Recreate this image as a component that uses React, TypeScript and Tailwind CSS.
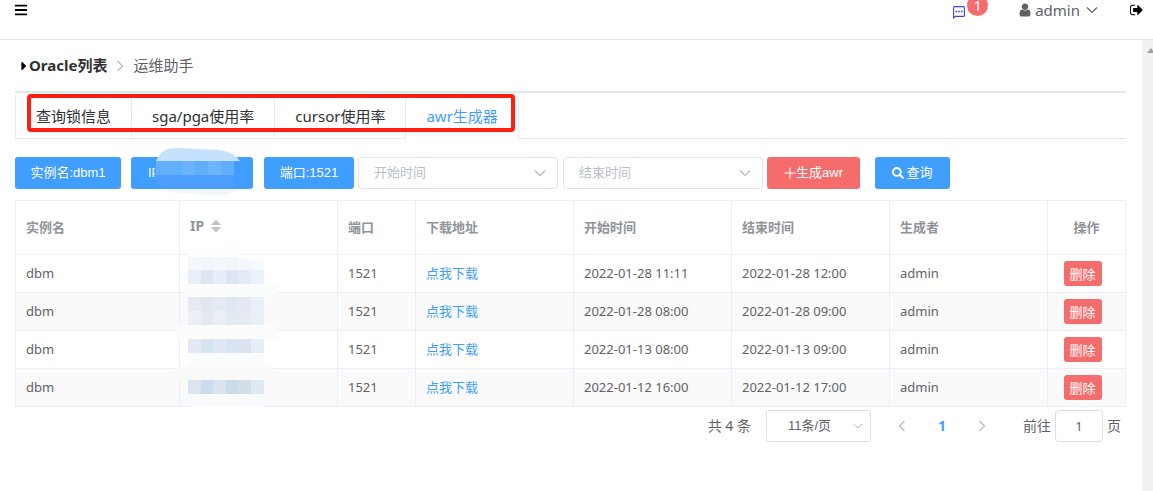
import { useState, type ReactNode } from 'react';
import { FaBars, FaCaretRight, FaSearch } from 'react-icons/fa';

const tabs = ['查询锁信息', 'sga/pga使用率', 'cursor使用率', 'awr生成器'];

const rows = [
  { name: 'dbm', port: '1521', start: '2022-01-28 11:11', end: '2022-01-28 12:00', owner: 'admin' },
  { name: 'dbm', port: '1521', start: '2022-01-28 08:00', end: '2022-01-28 09:00', owner: 'admin' },
  { name: 'dbm', port: '1521', start: '2022-01-13 08:00', end: '2022-01-13 09:00', owner: 'admin' },
  { name: 'dbm', port: '1521', start: '2022-01-12 16:00', end: '2022-01-12 17:00', owner: 'admin' },
];

type ChevronProps = { direction: 'down' | 'left' | 'right'; className: string };

function Chevron({ direction, className }: ChevronProps) {
  const paths = { down: 'M1 3.5 6 8.5 11 3.5', left: 'M8.5 1 3.5 6 8.5 11', right: 'M3.5 1 8.5 6 3.5 11' };
  return (
    <svg viewBox="0 0 12 12" fill="none" stroke="currentColor" className={className} aria-hidden="true">
      <path d={paths[direction]} strokeWidth="1.2" />
    </svg>
  );
}

function MessageIcon() {
  return (
    <svg viewBox="0 0 12 13" className="h-[13px] w-3" fill="none" stroke="#4040f0" aria-hidden="true">
      <path d="M.6 12V1.6q0-1 1-1h8.8q1 0 1 1v7.8q0 1-1 1H2.6L.6 12Z" strokeWidth="1.1" />
      <path d="M2.5 5.5h1.6M5.2 5.5h1.6M7.9 5.5h1.6" strokeWidth="1.4" />
    </svg>
  );
}

function UserIcon() {
  return (
    <svg viewBox="192 128 1408 1536" className="h-3.5 w-3" fill="currentColor" aria-hidden="true">
      <path d="M1536 1399q0 109-62.5 187t-150.5 78h-854q-88 0-150.5-78t-62.5-187q0-85 8.5-160.5t31.5-152 58.5-131 94-89 134.5-34.5q131 128 313 128t313-128q76 0 134.5 34.5t94 89 58.5 131 31.5 152 8.5 160.5zm-256-887q0 159-112.5 271.5t-271.5 112.5-271.5-112.5-112.5-271.5 112.5-271.5 271.5-112.5 271.5 112.5 112.5 271.5z" />
    </svg>
  );
}

function SignOutIcon() {
  return (
    <svg viewBox="64 192 1600 1408" className="h-3 w-[13px]" fill="currentColor" aria-hidden="true">
      <path d="M704 1440q0 4 1 20t.5 26.5-3 23.5-10 19.5-20.5 6.5h-320q-119 0-203.5-84.5t-84.5-203.5v-704q0-119 84.5-203.5t203.5-84.5h320q13 0 22.5 9.5t9.5 22.5q0 4 1 20t.5 26.5-3 23.5-10 19.5-20.5 6.5h-320q-66 0-113 47t-47 113v704q0 66 47 113t113 47h312l11.5 1 11.5 3 8 5.5 7 9 2 13.5zm928-544q0 26-19 45l-544 544q-19 19-45 19t-45-19-19-45v-288h-448q-26 0-45-19t-19-45v-384q0-26 19-45t45-19h448v-288q0-26 19-45t45-19 45 19l544 544q19 19 19 45z" />
    </svg>
  );
}

/* Pixelated cover over the address in the IP button. */
function ButtonMask() {
  const tiles = ['#62affe', '#62affe', '#6cb3fd', '#62aefe', '#6eb5ff', '#62aefe'];
  return (
    <svg viewBox="0 0 88 48" className="pointer-events-none absolute -top-2.5 left-[23px] h-12 w-[88px]" aria-hidden="true">
      <path d="M2 14Q8 0 23 1L66 3Q80 5 86 14Z" fill="#c6e1fe" />
      <path d="M2 14H86V42H8Q-3 30 2 14Z" fill="#4c9ffc" />
      {tiles.map((fill, i) => (
        <rect key={i} x={2 + i * 13} y="14" width="13" height="14" fill={fill} />
      ))}
      <rect x="80" y="14" width="6" height="28" fill="#429cff" />
      <path d="M8 42H83Q77 48 66 48L26 46Q14 46 8 42Z" fill="#f1f6fd" />
    </svg>
  );
}

const mosaic = [
  { y: 17, colors: ['#f4f7fc', '#f2f6fb', '#f4f7fc', '#f2f6fb', '#f4f7fc', '#f6f9fd'] },
  { y: 30, colors: ['#e8eff9', '#dde7f4', '#e7eef8', '#dde7f4', '#e4ebf6', '#eaf2fb'] },
  { y: 57, colors: ['#e5e9f2', '#e1e7f1', '#e5e9f2', '#e1e7f1', '#e3e8f2', '#e9eef8'] },
  { y: 71, colors: ['#eceff3', '#e4eaf2', '#ebeff4', '#e4eaf2', '#e6ebf3', '#eaeff6'] },
  { y: 99, colors: ['#e3eaf5', '#d6e3f1', '#e0e8f4', '#d6e3f1', '#dce3f0', '#e4eff7'] },
  { y: 140, colors: ['#dce4ef', '#ccdcec', '#d9e4ef', '#ccdbea', '#d4dee9', '#dfe9f3'] },
];

/* Pixelated cover over the addresses in the IP column. */
function ColumnMask() {
  return (
    <svg viewBox="0 0 104 170" className="pointer-events-none absolute top-10 left-40 h-[170px] w-[104px]" aria-hidden="true">
      <path d="M8 44Q8 8 28 5Q48 5 62 14L89 20V44Z" fill="#fdfefe" />
      {mosaic.map(({ y, colors }) =>
        colors.map((fill, i) => (
          <rect key={`${y}-${i}`} x={13 + Math.round(i * 12.6)} y={y} width="13" height="14" fill={fill} />
        )),
      )}
      <path d="M62 16H89V20Q80 18 74 20Q68 20 62 17Z" fill="#fefeff" />
      <path d="M10 44H102V57H6Z" fill="#fbfdfc" />
      <rect x="0" y="85" width="103" height="14" fill="#fcfcfc" />
      <rect x="13" y="113" width="76" height="14" fill="#fbfcfe" />
      <rect x="0" y="127" width="99" height="13" fill="#f9f9f9" />
      <path d="M6 154H95L89 167H15Z" fill="#f8fafc" />
    </svg>
  );
}

function PrimaryButton({ className, children }: { className: string; children: ReactNode }) {
  return (
    <button
      type="button"
      className={`h-8 rounded-[3px] bg-[#409eff] text-[13px] whitespace-nowrap text-white ${className}`}
    >
      {children}
    </button>
  );
}

function TimeSelect({ label, className }: { label: string; className: string }) {
  return (
    <div className={`relative w-[200px] ${className}`}>
      <select
        aria-label={label}
        defaultValue=""
        className="h-8 w-full appearance-none rounded border border-[#dfe3ec] bg-white pr-8 pl-[15px] text-[13px] text-[#b9bdc6]"
      >
        <option value="">{label}</option>
      </select>
      <Chevron direction="down" className="pointer-events-none absolute top-2.5 right-3 size-3 text-[#b4b8c0]" />
    </div>
  );
}

const headCell = 'border-r border-b border-[#ebeef5] px-2.5 pb-0.5 text-left font-bold text-[#909399]';
const bodyCell = 'border-r border-b border-[#ebeef5] px-2.5 pb-0.5';

export default function App() {
  const [active, setActive] = useState(3);
  const uiFont = "font-['Liberation_Sans','Noto_Sans_CJK_SC',sans-serif]";

  return (
    <div className="flex min-h-screen flex-col bg-white font-['Noto_Sans','Noto_Sans_CJK_SC',sans-serif] text-[#606266]">
      <header className="flex h-10 shrink-0 items-start justify-between border-b border-[#e4e6ea] pr-2.5 pl-3.5">
        <button type="button" aria-label="菜单" className="flex h-5 items-center text-black">
          <FaBars className="size-3.5" />
        </button>
        <div className="flex h-5 items-center">
          <button type="button" aria-label="消息" className="relative mr-[54px] flex h-5 items-end pb-px">
            <MessageIcon />
            <span className="absolute -top-[5px] left-3.5 flex h-[21px] w-[21px] items-center justify-center rounded-full bg-[#f56c6c] text-sm leading-[11px] text-white">
              1
            </span>
          </button>
          <button type="button" className="mr-8 flex h-5 items-center text-[15px] leading-5">
            <UserIcon />
            <span className="mr-1.5 ml-1">admin</span>
            <Chevron direction="down" className="size-3" />
          </button>
          <button type="button" aria-label="退出" className="text-black">
            <SignOutIcon />
          </button>
        </div>
      </header>

      <div className="flex grow">
        <main className="min-w-0 grow pr-4 pl-[15px]">
          <nav aria-label="breadcrumb" className="flex h-[51px] items-center pl-1 text-[15px]">
            <FaCaretRight className="h-3.5 w-2.5 text-black" />
            <a href="#oracle" className="font-bold text-[#303133]">
              Oracle列表
            </a>
            <Chevron direction="right" className="mx-[7px] size-3 text-[#b4b8c0]" />
            <span>运维助手</span>
          </nav>

          <div className="relative border-t-2 border-[#e4e6e8]">
            <div role="tablist" className="flex h-[46px]">
              {tabs.map((tab, i) => (
                <button
                  key={tab}
                  type="button"
                  role="tab"
                  aria-selected={i === active}
                  onClick={() => setActive(i)}
                  className={`border-r border-b border-r-[#e8eaef] px-5 pt-px text-[15px] whitespace-nowrap first:rounded-tl first:border-l first:border-l-[#e8eaef] ${
                    i === active ? 'border-b-white text-[#409eff]' : 'border-b-[#e4e7ed] text-[#303133]'
                  }`}
                >
                  {tab}
                </button>
              ))}
              <div className="grow border-b border-[#e4e7ed]" />
            </div>
            <div className="pointer-events-none absolute top-px left-3 h-[38px] w-[488px] rounded-[4px] border-4 border-[#ff1e12]" />
          </div>

          <div className={`mt-[18px] flex items-center ${uiFont}`}>
            <PrimaryButton className="mr-2.5 w-[106px]">实例名:dbm1</PrimaryButton>
            <div className="relative mr-[11px]">
              <PrimaryButton className="w-[122px] pl-[17px] text-left">IP:</PrimaryButton>
              <ButtonMask />
            </div>
            <PrimaryButton className="mr-1 w-[90px]">端口:1521</PrimaryButton>
            <TimeSelect label="开始时间" className="mr-[5px]" />
            <TimeSelect label="结束时间" className="mr-1" />
            <button
              type="button"
              className="mr-[15px] flex h-8 w-[93px] items-center justify-center rounded-[3px] bg-[#f56c6c] text-[13px] text-white"
            >
              <svg viewBox="0 0 12 12" className="size-3" stroke="currentColor" aria-hidden="true">
                <path d="M6 .5v11M.5 6h11" strokeWidth="1.1" />
              </svg>
              <span>生成awr</span>
            </button>
            <PrimaryButton className="flex w-[75px] items-center justify-center gap-0.5">
              <FaSearch className="size-3" />
              查询
            </PrimaryButton>
          </div>

          <div className="relative mt-[11px]">
            <table className="w-full table-fixed border-separate border-spacing-0 border-t border-l border-[#ebeef5] text-[13px] leading-5">
              <colgroup>
                <col className="w-[164px]" />
                <col className="w-[158px]" />
                <col className="w-[78px]" />
                <col className="w-[158px]" />
                <col className="w-[158px]" />
                <col className="w-[158px]" />
                <col className="w-[158px]" />
                <col className="w-[78px]" />
              </colgroup>
              <thead>
                <tr className="h-[54px]">
                  <th className={headCell}>实例名</th>
                  <th className={headCell}>
                    <button type="button" className="flex items-center gap-[7px] pb-0.5 text-sm leading-5">
                      IP
                      <svg viewBox="0 0 10 14" className="h-3.5 w-2.5" fill="#c0c4cc" aria-hidden="true">
                        <path d="M0 6 5 .5 10 6ZM0 8h10l-5 5.5Z" />
                      </svg>
                    </button>
                  </th>
                  <th className={headCell}>端口</th>
                  <th className={headCell}>下载地址</th>
                  <th className={headCell}>开始时间</th>
                  <th className={headCell}>结束时间</th>
                  <th className={headCell}>生成者</th>
                  <th className="border-r border-b border-[#ebeef5] pb-0.5 text-center font-bold text-[#909399]">操作</th>
                </tr>
              </thead>
              <tbody>
                {rows.map((row) => (
                  <tr key={row.start} className="h-[38px] even:bg-[#fafafa]">
                    <td className={bodyCell}>{row.name}</td>
                    <td className={bodyCell} />
                    <td className={bodyCell}>{row.port}</td>
                    <td className={bodyCell}>
                      <a href="#download" className="text-[#409eff]">
                        点我下载
                      </a>
                    </td>
                    <td className={bodyCell}>{row.start}</td>
                    <td className={bodyCell}>{row.end}</td>
                    <td className={bodyCell}>{row.owner}</td>
                    <td className="border-r border-b border-[#ebeef5] pr-2 text-center">
                      <button
                        type="button"
                        className="h-[25px] w-[38px] rounded-[3px] bg-[#f56c6c] align-middle leading-5 text-white"
                      >
                        删除
                      </button>
                    </td>
                  </tr>
                ))}
              </tbody>
            </table>
            <ColumnMask />
          </div>

          <div className="mt-[3px] flex items-center justify-end pr-[5px] text-sm">
            <span className="mr-[15px]">共 4 条</span>
            <div className={`relative mr-[11px] w-[105px] ${uiFont}`}>
              <select
                aria-label="每页条数"
                className="h-8 w-full appearance-none rounded-[3px] border border-[#dcdfe6] bg-white pl-[21px] text-[13px] text-[#606266]"
              >
                <option>11条/页</option>
              </select>
              <Chevron direction="down" className="pointer-events-none absolute top-[11px] right-2 size-2.5 text-[#b4b8c0]" />
            </div>
            <button type="button" aria-label="上一页" className="flex w-10 justify-center text-[#b4b8c0]">
              <Chevron direction="left" className="size-3" />
            </button>
            <button type="button" className="w-10 text-center font-bold text-[#409eff]">
              1
            </button>
            <button type="button" aria-label="下一页" className="mr-[21px] flex w-10 justify-center text-[#b4b8c0]">
              <Chevron direction="right" className="size-3" />
            </button>
            <label htmlFor="page" className="mr-1">
              前往
            </label>
            <input
              id="page"
              type="text"
              defaultValue="1"
              className="mr-1 h-8 w-12 rounded border border-[#dcdfe6] text-center text-[13px]"
            />
            <span>页</span>
          </div>
        </main>

        <div className="flex w-[11px] shrink-0 justify-end overflow-hidden bg-[#f1f1f1] pt-2">
          <svg viewBox="0 0 6 5" className="h-[5px] w-1.5" fill="#a3a3a3" aria-hidden="true">
            <path d="M0 5 4 0 6 2.5V5Z" />
          </svg>
        </div>
      </div>
    </div>
  );
}
